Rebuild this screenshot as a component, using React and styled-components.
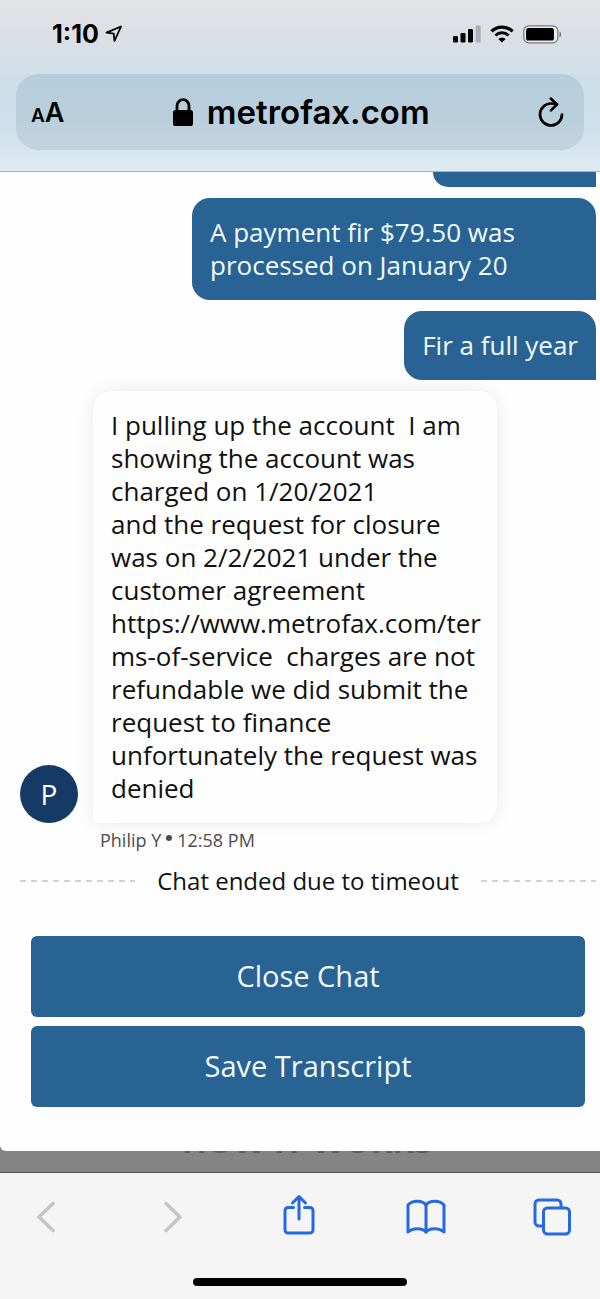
import React from "react";
import styled, { createGlobalStyle } from "styled-components";

const GlobalStyle = createGlobalStyle`
  * {
    box-sizing: border-box;
  }
  body {
    margin: 0;
    background-color: #848484;
    font-family: "Open Sans", "Noto Sans", sans-serif;
  }
  button {
    margin: 0;
    padding: 0;
    border: none;
    background: none;
    font-family: inherit;
    cursor: pointer;
  }
  svg {
    display: block;
  }
`;

const Page = styled.div`
  display: flex;
  flex-direction: column;
  min-height: 100vh;
`;

const Header = styled.header`
  padding: 0 16px 21px;
  border-bottom: 1px solid #a9b3bc;
  font-family: Inter, "Liberation Sans", sans-serif;
  background: linear-gradient(
    to bottom,
    #e3e3e6 0%,
    #dadfe5 25%,
    #cddfe9 48%,
    #cde0eb 75%,
    #dfebf3 100%
  );
`;

const StatusBar = styled.div`
  display: flex;
  justify-content: space-between;
  align-items: center;
  height: 74px;
  padding: 0 22px 6px 36px;
`;

const StatusGroup = styled.div`
  display: flex;
  align-items: center;
  gap: ${(props) => props.$gap}px;
`;

const Clock = styled.span`
  font-size: 25px;
  font-weight: 700;
  line-height: 28px;
  color: black;
`;

const AddressBar = styled.div`
  display: flex;
  justify-content: space-between;
  align-items: center;
  height: 76px;
  padding: 0 20px 0 15px;
  border-radius: 22px;
  background: linear-gradient(to bottom, #b5cddc, #bacfdc 60%, #c2d3de);
`;

const TextSizeButton = styled.button`
  display: flex;
  align-items: baseline;
  font-size: 19px;
  font-weight: 600;
  color: black;

  .large {
    font-size: 27px;
  }
`;

const Site = styled.div`
  display: flex;
  align-items: center;
  gap: 14px;
  font-size: 33px;
  font-weight: 600;
  line-height: 44px;
  color: black;
`;

const ChatPanel = styled.main`
  flex: 1;
  display: flex;
  flex-direction: column;
  position: relative;
  z-index: 1;
  padding: 0 4px 44px 0;
  border-radius: 0 0 0 6px;
  background-color: #fefefe;
`;

const Messages = styled.div`
  display: flex;
  flex-direction: column;
  align-items: flex-end;
  gap: 11px;
`;

const Bubble = styled.div`
  max-width: 404px;
  padding: ${(props) => (props.$agent ? "18px 10px 18px 18px" : "18px")};
  border-radius: ${(props) =>
    props.$agent ? "18px 18px 18px 0" : "18px 18px 0 18px"};
  background-color: ${(props) => (props.$agent ? "#fefefe" : "#286394")};
  box-shadow: ${(props) =>
    props.$agent ? "0 0 18px rgba(0, 0, 0, 0.09)" : "none"};
  font-size: 26px;
  line-height: 33px;
  color: ${(props) => (props.$agent ? "#111" : "#f1faff")};
  white-space: pre-wrap;
  overflow-wrap: anywhere;
`;

// lower edge of the message that is scrolled under the header
const ScrolledBubble = styled.div`
  width: 163px;
  height: 15px;
  border-radius: 0 0 0 18px;
  background-color: #286394;
`;

const AgentRow = styled.div`
  display: flex;
  align-items: flex-end;
  gap: 15px;
  width: 100%;
  padding-left: 20px;
`;

const Avatar = styled.div`
  flex: none;
  display: flex;
  align-items: center;
  justify-content: center;
  width: 58px;
  height: 58px;
  border-radius: 50%;
  background-color: #163a66;
  font-size: 28px;
  color: white;
`;

const Meta = styled.div`
  display: flex;
  align-items: center;
  gap: 5px;
  padding: 4px 0 0 100px;
  font-size: 18px;
  line-height: 26px;
  color: #4c4c4c;
`;

const Dot = styled.span`
  width: 6px;
  height: 6px;
  margin-bottom: 4px;
  border-radius: 50%;
  background-color: #4c4c4c;
`;

const Ended = styled.div`
  display: flex;
  align-items: center;
  gap: 22px;
  margin-top: 11px;
  padding-left: 20px;
  font-size: 24px;
  line-height: 34px;
  color: #111;
  white-space: nowrap;
`;

const Dashes = styled.div`
  flex: 1;
  height: 2px;
  background: repeating-linear-gradient(
    to right,
    #d2d2d2 0,
    #d2d2d2 6px,
    transparent 6px,
    transparent 11px
  );
`;

const Actions = styled.div`
  display: flex;
  flex-direction: column;
  gap: 9px;
  margin-top: auto;
  padding: 0 11px 0 31px;
`;

const ActionButton = styled.button`
  height: 81px;
  padding-bottom: 2px;
  border-radius: 6px;
  background-color: #286394;
  font-size: 29px;
  color: #f1faff;
`;

const Behind = styled.section`
  height: 21px;
  overflow: hidden;
  background-color: #848484;

  h2 {
    margin: -31px 0 0;
    padding-left: 14px;
    font-size: 33px;
    line-height: 42px;
    text-align: center;
    color: #4f6068;
  }
`;

const Footer = styled.footer`
  display: flex;
  flex-direction: column;
  align-items: center;
  justify-content: space-between;
  height: 127px;
  padding-bottom: 13px;
  border-top: 1px solid #555;
  background-color: #f5f5f5;
`;

const Toolbar = styled.nav`
  display: flex;
  justify-content: space-between;
  width: 100%;
  padding: 21px 26px 0 24px;
`;

const ToolButton = styled.button`
  display: flex;
  align-items: center;
  justify-content: center;
  width: 44px;
  height: 46px;
  color: ${(props) => (props.disabled ? "#c5c5c5" : "#2569e3")};
`;

const HomeIndicator = styled.div`
  width: 214px;
  height: 8px;
  border-radius: 4px;
  background-color: black;
`;

const stroke = {
  fill: "none",
  stroke: "currentColor",
  strokeLinecap: "round",
  strokeLinejoin: "round",
};

const LocationIcon = () => (
  <svg width="18" height="18" viewBox="0 0 18 18" {...stroke} strokeWidth="1.8">
    <path d="M16 1.500 1.500 7.700l7.200.9.8 7.400z" />
  </svg>
);

const SignalIcon = () => (
  <svg width="28" height="18" viewBox="0 0 28 18">
    <rect x="0" y="11" width="5" height="6.5" rx="1.2" />
    <rect x="7.5" y="8" width="5" height="9.5" rx="1.2" />
    <rect x="15" y="4" width="5" height="13.5" rx="1.2" />
    <rect x="22.7" y="0.5" width="5" height="17" rx="1.2" fill="#a9b0b8" />
  </svg>
);

const WifiIcon = () => (
  <svg width="24" height="18" viewBox="0 0 24 18" fill="none" stroke="black">
    <path d="M1.4 6.4a15.2 15.2 0 0 1 21.2 0" strokeWidth="3.2" />
    <path d="M5.4 10.5a9.5 9.5 0 0 1 13.2 0" strokeWidth="3" />
    <path d="M12 17.6 8.3 13.9a5.3 5.3 0 0 1 7.4 0z" fill="black" stroke="none" />
  </svg>
);

const BatteryIcon = () => (
  <svg width="39" height="19" viewBox="0 0 39 19">
    <rect
      x="0.8"
      y="0.8"
      width="34"
      height="17"
      rx="5"
      fill="#eceff2"
      stroke="#74797f"
      strokeWidth="1.2"
    />
    <rect x="3" y="3" width="28" height="12.6" rx="2.6" />
    <path d="M36.5 6.5c2.2 1 2.2 5 0 6z" fill="#74797f" />
  </svg>
);

const LockIcon = () => (
  <svg width="20" height="28" viewBox="0 0 20 28">
    <rect x="0" y="12" width="20" height="16" rx="2.6" />
    <path
      d="M4 13V8a6 6.4 0 0 1 12 0v5"
      fill="none"
      stroke="black"
      strokeWidth="2.8"
    />
  </svg>
);

const ReloadIcon = () => (
  <svg width="26" height="30" viewBox="0 0 26 30" {...stroke} strokeWidth="2.7">
    <path d="M24 17.5A11 11 0 1 1 13 6.5q3 0 5.5.6" />
    <path d="M12.8 1.6 19 7.4l-6 6" />
  </svg>
);

const BackIcon = () => (
  <svg width="20" height="32" viewBox="0 0 20 32" {...stroke} strokeWidth="3.6">
    <path d="M17 2.5 3 16l14 13.5" />
  </svg>
);

const ForwardIcon = () => (
  <svg width="20" height="32" viewBox="0 0 20 32" {...stroke} strokeWidth="3.6">
    <path d="m3 2.5 14 13.5L3 29.5" />
  </svg>
);

const ShareIcon = () => (
  <svg width="32" height="46" viewBox="0 0 32 46" {...stroke} strokeWidth="3">
    <path d="M10.500 13.500H5a3 3 0 0 0-3 3V36a3 3 0 0 0 3 3h22a3 3 0 0 0 3-3V16.500a3 3 0 0 0-3-3h-5.500" />
    <path d="M16 25V2.500M9.500 9 16 2.500 22.500 9" />
  </svg>
);

const BookIcon = () => (
  <svg width="40" height="36" viewBox="0 0 40 36" {...stroke} strokeWidth="3">
    <path d="M20 6.200C16.500 1 6.500 1 2 6v27c4.500-4.500 14.500-4.500 18 0 3.500-4.500 13.500-4.500 18 0V6C33.500 1 23.500 1 20 6.200z" />
    <path d="M20 6v27" />
  </svg>
);

const TabsIcon = () => (
  <svg width="38" height="38" viewBox="0 0 38 38" {...stroke} strokeWidth="3">
    <path d="M9 28H6a4 4 0 0 1-4-4V6a4 4 0 0 1 4-4h18a4 4 0 0 1 4 4v3.500" />
    <rect x="10.500" y="10" width="26" height="26" rx="4" />
  </svg>
);

export default function App() {
  return (
    <>
      <GlobalStyle />
      <Page>
        <Header>
          <StatusBar>
            <StatusGroup $gap={6}>
              <Clock>1:10</Clock>
              <LocationIcon />
            </StatusGroup>
            <StatusGroup $gap={9}>
              <SignalIcon />
              <WifiIcon />
              <BatteryIcon />
            </StatusGroup>
          </StatusBar>
          <AddressBar>
            <TextSizeButton aria-label="Text size">
              <span>A</span>
              <span className="large">A</span>
            </TextSizeButton>
            <Site>
              <LockIcon />
              <span>metrofax.com</span>
            </Site>
            <button aria-label="Reload">
              <ReloadIcon />
            </button>
          </AddressBar>
        </Header>

        <ChatPanel>
          <Messages>
            <ScrolledBubble />
            <Bubble>A payment fir $79.50 was processed on January 20</Bubble>
            <Bubble>Fir a full year</Bubble>
            <AgentRow>
              <Avatar>P</Avatar>
              <Bubble $agent>
                {"I pulling up the account  I am showing the account was charged on 1/20/2021\n" +
                  "and the request for closure was on 2/2/2021 under the customer agreement " +
                  "https://www.metrofax.com/terms-of-service  charges are not refundable we did " +
                  "submit the request to finance unfortunately the request was denied"}
              </Bubble>
            </AgentRow>
          </Messages>
          <Meta>
            <span>Philip Y</span>
            <Dot />
            <span>12:58 PM</span>
          </Meta>
          <Ended>
            <Dashes />
            <span>Chat ended due to timeout</span>
            <Dashes />
          </Ended>
          <Actions>
            <ActionButton>Close Chat</ActionButton>
            <ActionButton>Save Transcript</ActionButton>
          </Actions>
        </ChatPanel>

        <Behind>
          <h2>HOW IT WORKS</h2>
        </Behind>

        <Footer>
          <Toolbar>
            <ToolButton disabled aria-label="Back">
              <BackIcon />
            </ToolButton>
            <ToolButton disabled aria-label="Forward">
              <ForwardIcon />
            </ToolButton>
            <ToolButton aria-label="Share">
              <ShareIcon />
            </ToolButton>
            <ToolButton aria-label="Bookmarks">
              <BookIcon />
            </ToolButton>
            <ToolButton aria-label="Tabs">
              <TabsIcon />
            </ToolButton>
          </Toolbar>
          <HomeIndicator />
        </Footer>
      </Page>
    </>
  );
}
